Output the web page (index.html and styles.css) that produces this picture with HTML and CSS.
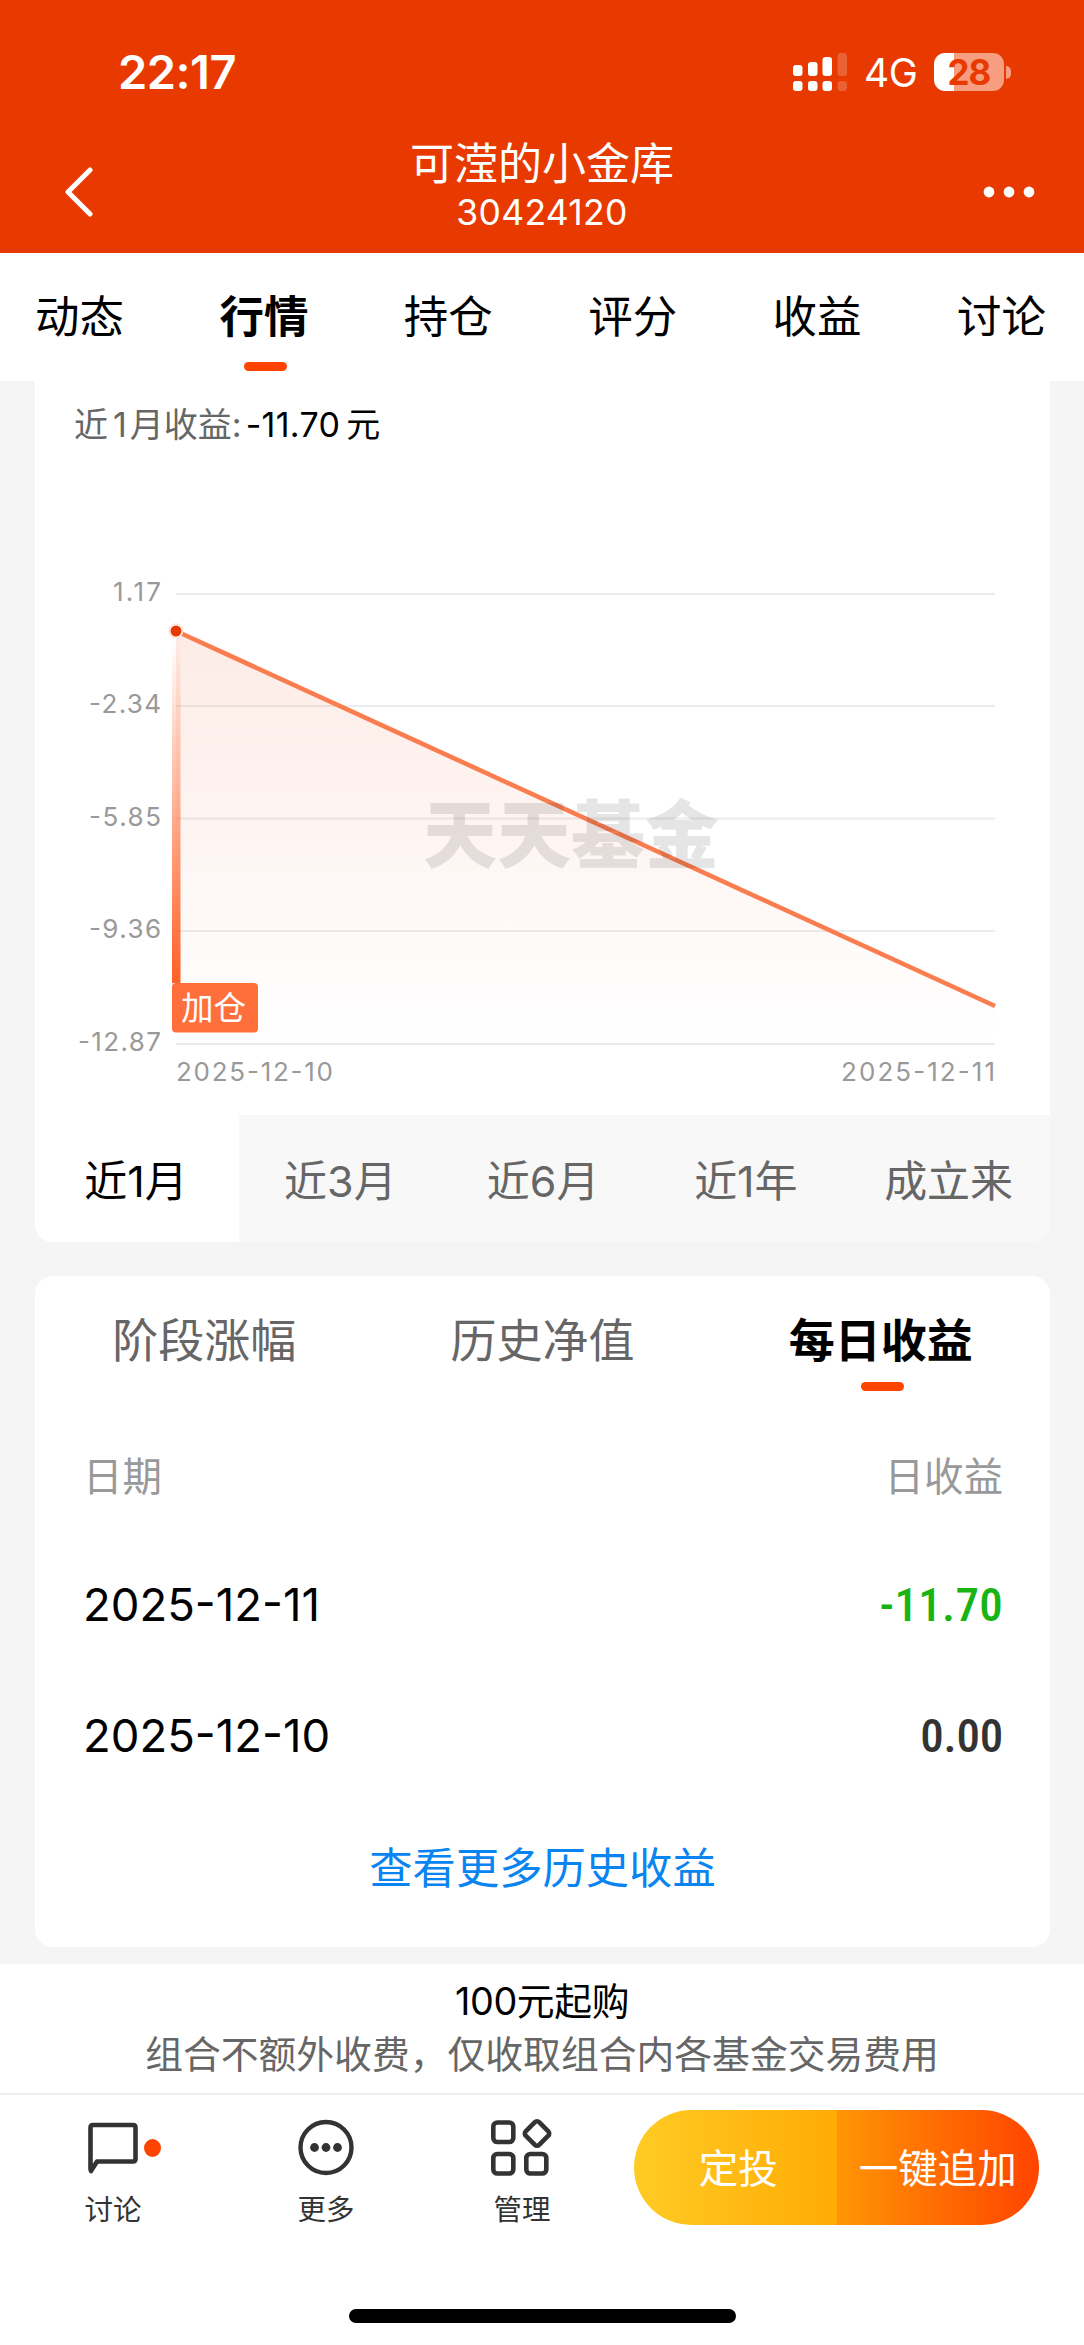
FILE: index.html
```
<!DOCTYPE html>
<html lang="zh-CN">
<head>
    <meta charset="UTF-8">
    <meta name="viewport" content="width=device-width, initial-scale=1.0">
    <title>可滢的小金库</title>
    <link rel="stylesheet" href="styles.css">
</head>
<body>
    <header class="header">
        <div class="status-bar">
            <div class="time">22:17</div>
            <div class="status-icons">
                <svg class="signal" width="54" height="38" viewBox="0 0 54 38" fill="#fff">
                    <rect x="0" y="12" width="9.5" height="11" rx="3"/>
                    <rect x="15" y="9" width="9.5" height="14" rx="3"/>
                    <rect x="29.5" y="4" width="9.5" height="19" rx="3"/>
                    <rect x="44.5" y="0" width="9.5" height="23" rx="3" opacity=".2"/>
                    <rect x="0" y="28" width="9.5" height="10" rx="3"/>
                    <rect x="15" y="28" width="9.5" height="10" rx="3"/>
                    <rect x="29.5" y="28" width="9.5" height="10" rx="3"/>
                    <rect x="44.5" y="28" width="9.5" height="10" rx="3" opacity=".2"/>
                </svg>
                <span class="network">4G</span>
                <div class="battery">28</div>
                <div class="battery-tip"></div>
            </div>
        </div>
        <div class="title-bar">
            <svg width="30" height="52" viewBox="0 0 30 52" fill="none" stroke="#fff" stroke-width="5" stroke-linecap="round" stroke-linejoin="round">
                <path d="M27 4L5 26L27 48"/>
            </svg>
            <div class="title">
                <h1>可滢的小金库</h1>
                <p>30424120</p>
            </div>
            <svg width="52" height="12" viewBox="0 0 52 12" fill="#fff">
                <circle cx="6" cy="6" r="5.4"/>
                <circle cx="26" cy="6" r="5.4"/>
                <circle cx="46" cy="6" r="5.4"/>
            </svg>
        </div>
    </header>

    <nav class="tabs">
        <a>动态</a>
        <a class="active">行情</a>
        <a>持仓</a>
        <a>评分</a>
        <a>收益</a>
        <a>讨论</a>
    </nav>

    <main>
        <section class="card chart-card">
            <p class="summary">近<i>1</i>月收益:<b>-11.70</b><em>元</em></p>
            <svg class="chart" width="1015" height="560" viewBox="35 540 1015 560">
                <defs>
                    <linearGradient id="area" x1="0" y1="631" x2="0" y2="1044" gradientUnits="userSpaceOnUse">
                        <stop offset="0" stop-color="#e83a00" stop-opacity=".1"/>
                        <stop offset="1" stop-color="#e83a00" stop-opacity="0"/>
                    </linearGradient>
                    <linearGradient id="stem" x1="0" y1="640" x2="0" y2="983" gradientUnits="userSpaceOnUse">
                        <stop offset="0" stop-color="#ff6026" stop-opacity="0"/>
                        <stop offset="1" stop-color="#ff6026"/>
                    </linearGradient>
                </defs>
                <!-- grid -->
                <path d="M176 594H995M176 706H995M176 818.5H995M176 931H995M176 1044H995" stroke="#ececec" stroke-width="2"/>
                <path d="M176 631L995 1006V1044H176Z" fill="url(#area)"/>
                <path d="M176 631L995 1006" stroke="#fa7d50" stroke-width="4.6"/>
                <text class="watermark" x="423" y="862" textLength="296">天天基金</text>
                <!-- buy marker -->
                <rect x="172" y="640" width="8.5" height="343" fill="url(#stem)"/>
                <circle cx="176" cy="631" r="7" fill="#fff" stroke="#fbd5c7"/>
                <circle cx="176" cy="631" r="5.5" fill="#e83a00"/>
                <rect x="172" y="983" width="86" height="49.5" rx="4" fill="#ff6f3c"/>
                <text class="marker" x="181" y="1019.5">加仓</text>
                <g class="axis" text-anchor="end">
                    <text x="161" y="601" textLength="48">1.17</text>
                    <text x="161" y="713" textLength="72">-2.34</text>
                    <text x="161" y="826" textLength="72">-5.85</text>
                    <text x="161" y="938" textLength="72">-9.36</text>
                    <text x="161" y="1051" textLength="83">-12.87</text>
                </g>
                <g class="axis">
                    <text x="176" y="1081" textLength="157">2025-12-10</text>
                    <text x="841" y="1081" textLength="154">2025-12-11</text>
                </g>
            </svg>
            <div class="ranges">
                <a class="active">近1月</a>
                <a>近3月</a>
                <a>近6月</a>
                <a>近1年</a>
                <a>成立来</a>
            </div>
        </section>

        <section class="card">
            <div class="sub-tabs">
                <a>阶段涨幅</a>
                <a>历史净值</a>
                <a class="active">每日收益</a>
            </div>
            <div class="row row-head">
                <span>日期</span>
                <span>日收益</span>
            </div>
            <div class="row">
                <span class="date">2025-12-11</span>
                <span class="value down">-11.70</span>
            </div>
            <div class="row">
                <span class="date">2025-12-10</span>
                <span class="value">0.00</span>
            </div>
            <a class="more-link">查看更多历史收益</a>
        </section>
    </main>

    <footer>
        <div class="notice">
            <p class="min-buy">100元起购</p>
            <p class="fee">组合不额外收费，仅收取组合内各基金交易费用</p>
        </div>
        <div class="toolbar">
            <div class="tool tool-chat">
                <svg width="64" height="64" viewBox="0 0 64 64" fill="none" stroke="#333" stroke-width="4.6" stroke-linejoin="round">
                    <path d="M9.5 54V12.5Q9.5 10 12 10H52Q54.5 10 54.5 12.5V44Q54.5 46.5 52 46.5H16L10 56Z"/>
                </svg>
                <span class="dot"></span>
                <span>讨论</span>
            </div>
            <div class="tool tool-more">
                <svg width="64" height="64" viewBox="0 0 64 64">
                    <circle cx="32" cy="32.5" r="25.5" fill="none" stroke="#333" stroke-width="4.4"/>
                    <circle cx="20.5" cy="32.5" r="4.4" fill="#333"/>
                    <circle cx="32" cy="32.5" r="4.4" fill="#333"/>
                    <circle cx="43.5" cy="32.5" r="4.4" fill="#333"/>
                </svg>
                <span>更多</span>
            </div>
            <div class="tool tool-manage">
                <svg width="64" height="64" viewBox="0 0 64 64" fill="none" stroke="#333" stroke-width="4.6">
                    <rect x="3.3" y="7.5" width="20" height="19.5" rx="4"/>
                    <rect x="3.3" y="39" width="20" height="19.5" rx="4"/>
                    <rect x="36.3" y="39" width="20" height="19.5" rx="4"/>
                    <rect x="37.5" y="9" width="19" height="19" rx="3" transform="rotate(45 47 18.5)"/>
                </svg>
                <span>管理</span>
            </div>
            <div class="actions">
                <button class="btn-plan">定投</button>
                <button class="btn-add">一键追加</button>
            </div>
        </div>
        <div class="home-bar"></div>
    </footer>
</body>
</html>
```
FILE: styles.css
```
* {
    box-sizing: border-box;
    margin: 0;
    padding: 0;
}
body {
    width: 1084px;
    height: 2345px;
    overflow: hidden;
    display: flex;
    flex-direction: column;
    background-color: #f5f5f5;
    color: #000;
    font-family: Inter, "Noto Sans CJK SC", sans-serif;
}
i, em {
    font-style: normal;
}

/* header */
.header {
    height: 253px;
    background-color: #e83a00;
    color: white;
}
.status-bar {
    height: 136px;
    padding: 8px 73px 0 118px;
    display: flex;
    justify-content: space-between;
    align-items: center;
}
.time {
    margin-top: -2px;
    font-size: 47px;
    font-weight: 600;
    letter-spacing: -0.5px;
}
.status-icons {
    display: flex;
    align-items: center;
}
.network {
    margin-left: 17px;
    width: 54px;
    font-size: 39px;
    line-height: 38px;
    letter-spacing: -0.5px;
    padding-top: 2px;
}
.battery {
    width: 70px;
    height: 38px;
    margin-left: 16px;
    border-radius: 11px;
    background: linear-gradient(to right, #fff 20px, #f79d80 20px);
    color: #e83a00;
    font-size: 35px;
    font-weight: 700;
    line-height: 38px;
    text-align: center;
    letter-spacing: -1px;
}
.battery-tip {
    width: 5px;
    height: 13px;
    margin-left: 2px;
    border-radius: 0 6px 6px 0;
    background-color: #f79d80;
}
.title-bar {
    height: 111px;
    padding: 0 49px 0 63px;
    display: flex;
    justify-content: space-between;
    align-items: center;
}
.title {
    text-align: center;
    margin-left: 8px;
    margin-top: -11px;
}
.title h1 {
    font-size: 44px;
    font-weight: 400;
    line-height: 53px;
}
.title p {
    font-size: 35.5px;
    line-height: 44px;
    letter-spacing: 0.3px;
}

/* top tabs */
.tabs {
    height: 128px;
    padding: 0 38px 0 35px;
    display: flex;
    justify-content: space-between;
    background-color: white;
    font-size: 44.5px;
    line-height: 129px;
}
.tabs a {
    position: relative;
}
.tabs .active,
.sub-tabs .active {
    color: #000;
    font-weight: 700;
}
.active::after {
    content: "";
    position: absolute;
    left: 50%;
    width: 43px;
    height: 9px;
    margin-left: -20px;
    border-radius: 4.5px;
    background-color: #ff4400;
}
.tabs .active::after {
    top: 109px;
}

/* cards */
.card {
    margin: 0 34px 34px 35px;
    background-color: white;
    border-radius: 18px;
    overflow: hidden;
}
.chart-card {
    height: 861px;
    border-radius: 0 0 18px 18px;
}
.summary {
    height: 159px;
    padding: 20px 0 0 39px;
    color: #666;
    font-size: 34px;
    line-height: 48px;
}
.summary i {
    margin: 0 3px 0 5px;
}
.summary b {
    margin-left: 4px;
    color: #000;
    font-weight: 400;
    letter-spacing: 0.3px;
}
.summary em {
    margin-left: 6px;
    color: #000;
}
.chart {
    display: block;
    margin-bottom: 15px;
}
.watermark {
    font-size: 74px;
    font-weight: 900;
    fill: #000;
    fill-opacity: .1;
}
.marker {
    font-size: 32.5px;
    fill: white;
}
.axis {
    font-size: 26px;
    fill: #999;
}
.ranges {
    display: grid;
    grid-template-columns: 204px repeat(4, 1fr);
    height: 127px;
    background-color: #f8f8f8;
    color: #666;
    font-size: 43px;
    line-height: 132px;
    text-align: center;
}
.ranges .active {
    background-color: white;
    color: #000;
    padding-right: 2px;
}
.ranges .active::after {
    display: none;
}

/* daily income */
.sub-tabs {
    display: grid;
    grid-template-columns: repeat(3, 1fr);
    height: 134px;
    color: #666;
    font-size: 46px;
    line-height: 129px;
    text-align: center;
}
.sub-tabs a {
    position: relative;
}
.sub-tabs .active::after {
    top: 106px;
}
.row {
    height: 131px;
    padding: 0 47px 0 48px;
    display: flex;
    justify-content: space-between;
    align-items: center;
}
.row-head {
    height: 129px;
    padding-bottom: 3px;
    color: #999;
    font-size: 39.5px;
}
.date {
    font-size: 45.5px;
}
.value {
    color: #333;
    font-family: Roboto, sans-serif;
    font-size: 47px;
    font-weight: 550;
    font-stretch: 75%;
    letter-spacing: -0.2px;
}
.down {
    color: #17b413;
    letter-spacing: 0.3px;
}
.more-link {
    display: block;
    height: 146px;
    color: #0a84f0;
    font-size: 43.3px;
    line-height: 135px;
    text-align: center;
}

/* bottom bar */
footer {
    position: absolute;
    top: 1964px;
    width: 1084px;
    height: 381px;
    background-color: white;
}
.notice {
    height: 131px;
    padding-top: 11px;
    border-bottom: 2px solid #eee;
    text-align: center;
    font-size: 37.8px;
    line-height: 53px;
}
.min-buy {
    letter-spacing: -0.4px;
}
.fee {
    color: #666;
}
.toolbar {
    display: flex;
    padding-top: 15px;
}
.tool {
    position: relative;
    display: flex;
    flex-direction: column;
    align-items: center;
    padding-top: 5px;
    color: #333;
    font-size: 28.5px;
    line-height: 34px;
}
.tool svg {
    margin-bottom: 14px;
}
.tool-chat {
    width: 226px;
}
.tool-more {
    width: 200px;
}
.tool-manage {
    width: 192px;
}
.dot {
    position: absolute;
    top: 29px;
    left: 144px;
    width: 17px;
    height: 18px;
    border-radius: 50%;
    background-color: #ff4400;
}
.actions {
    display: flex;
    width: 405px;
    height: 115px;
    margin-left: 16px;
    border-radius: 58px;
    overflow: hidden;
}
.actions button {
    width: 203px;
    padding-bottom: 5px;
    border: none;
    color: white;
    font-family: inherit;
    font-size: 39.5px;
}
.actions .btn-plan {
    padding-left: 6px;
    background: linear-gradient(to right, #ffcb25, #ffab03);
}
.btn-add {
    background: linear-gradient(to right, #ff9505, #ff4400);
}
.home-bar {
    width: 387px;
    height: 14px;
    margin: 82px auto 0;
    border-radius: 7px;
    background-color: #000;
}
```
